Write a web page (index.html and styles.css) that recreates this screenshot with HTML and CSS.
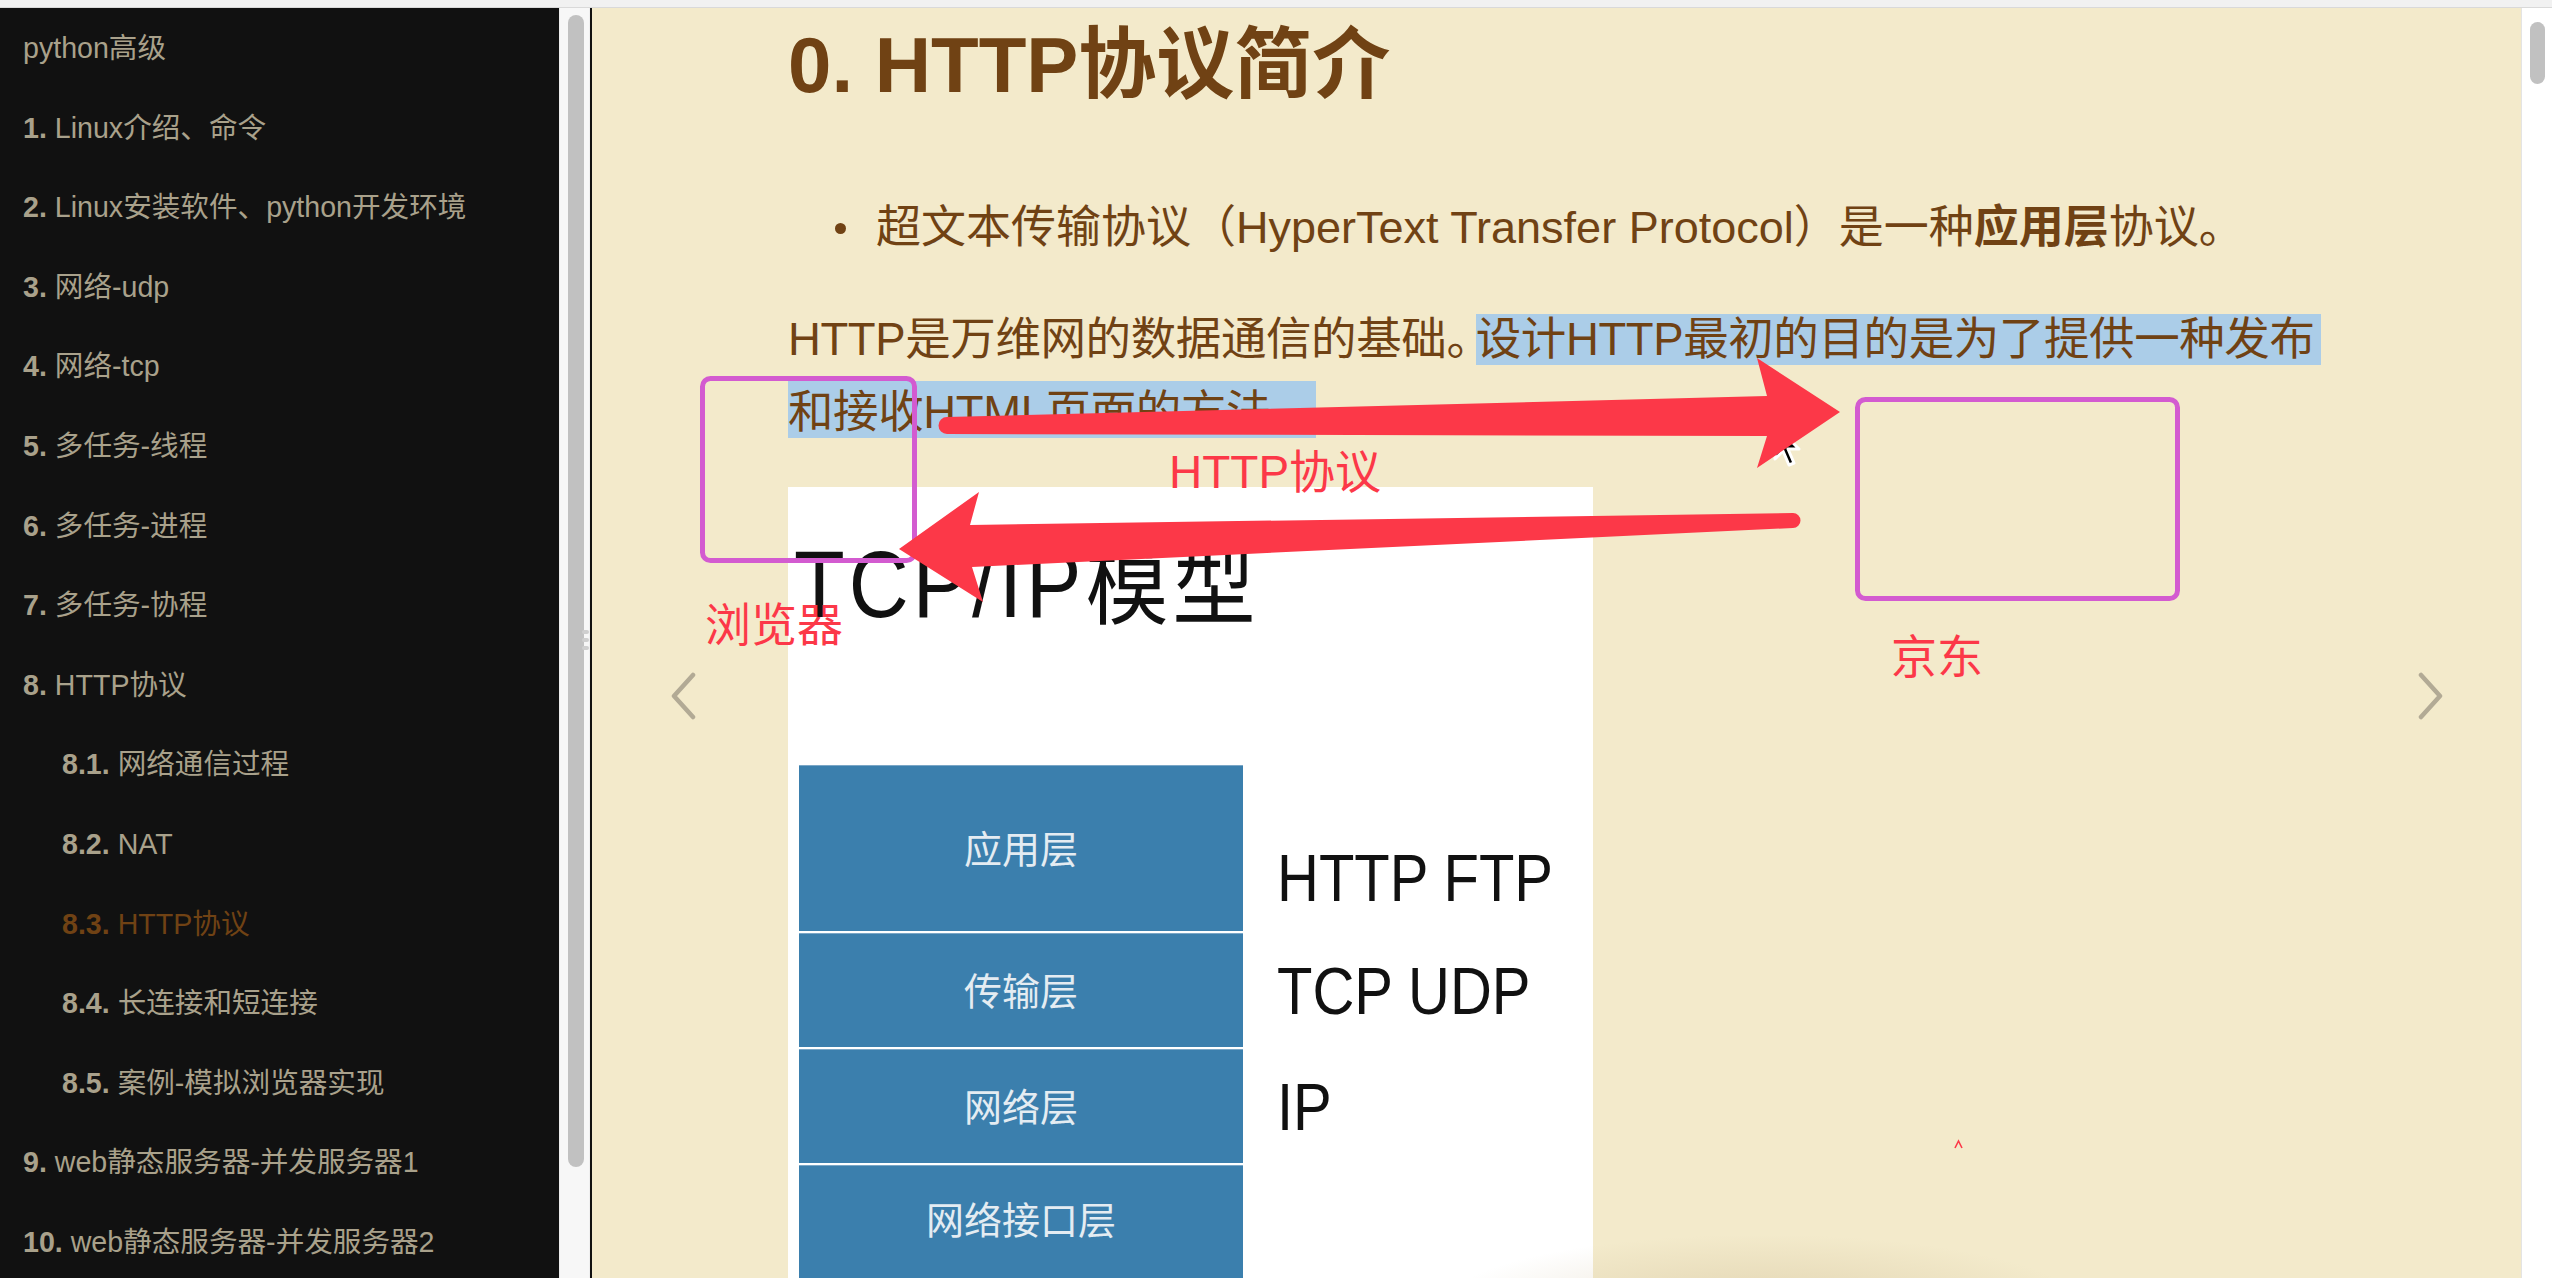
FILE: index.html
```html
<!DOCTYPE html>
<html lang="zh-CN">
<head>
<meta charset="utf-8">
<title>HTTP协议</title>
<link rel="stylesheet" href="styles.css">
</head>
<body>
<div class="topbar"></div>
<div class="app">
  <aside class="sidebar">
    <ul class="summary">
      <li class="header">python高级</li>
      <li><b>1.</b> Linux介绍、命令</li>
      <li><b>2.</b> Linux安装软件、python开发环境</li>
      <li><b>3.</b> 网络-udp</li>
      <li><b>4.</b> 网络-tcp</li>
      <li><b>5.</b> 多任务-线程</li>
      <li><b>6.</b> 多任务-进程</li>
      <li><b>7.</b> 多任务-协程</li>
      <li><b>8.</b> HTTP协议</li>
      <li class="sub"><b>8.1.</b> 网络通信过程</li>
      <li class="sub"><b>8.2.</b> NAT</li>
      <li class="sub active"><b>8.3.</b> HTTP协议</li>
      <li class="sub"><b>8.4.</b> 长连接和短连接</li>
      <li class="sub"><b>8.5.</b> 案例-模拟浏览器实现</li>
      <li><b>9.</b> web静态服务器-并发服务器1</li>
      <li><b>10.</b> web静态服务器-并发服务器2</li>
    </ul>
  </aside>
  <div class="lscroll">
    <div class="lthumb"></div>
    <div class="grip"><i></i><i></i><i></i></div>
  </div>
  <main class="content">
    <div class="page">
      <h1>0. HTTP协议简介</h1>
      <ul class="bullets">
        <li>超文本传输协议（HyperText Transfer Protocol）是一种<strong>应用层</strong>协议。</li>
      </ul>
      <p class="para">HTTP是万维网的数据通信的基础<span class="halt">。</span><span class="sel1">设计HTTP最初的目的是为了提供一种发布</span><br><span class="sel2">和接收HTML页面的方法。</span></p>
      <div class="figure">
        <div class="fig-title">TCP/IP模型</div>
        <div class="stack">
          <div class="layer l1">应用层</div><div class="proto p1">HTTP FTP</div>
          <div class="layer l2">传输层</div><div class="proto p2">TCP UDP</div>
          <div class="layer l3">网络层</div><div class="proto p3">IP</div>
          <div class="layer l4">网络接口层</div><div class="proto"></div>
        </div>
      </div>
    </div>
    <div class="nav nav-prev"><svg width="28" height="48" viewBox="0 0 28 48"><polyline points="24,3 5,24 24,45" fill="none" stroke="#b2aa95" stroke-width="4.5" stroke-linecap="round" stroke-linejoin="round"/></svg></div>
    <div class="nav nav-next"><svg width="28" height="48" viewBox="0 0 28 48"><polyline points="4,3 23,24 4,45" fill="none" stroke="#b2aa95" stroke-width="4.5" stroke-linecap="round" stroke-linejoin="round"/></svg></div>
    <div class="vignette"></div>
  </main>
  <div class="rscroll"><div class="rthumb"></div></div>
</div>

<svg class="annot" width="2552" height="1278" viewBox="0 0 2552 1278">
  <rect x="702.5" y="378.5" width="212" height="182" rx="8" fill="none" stroke="#d35bd0" stroke-width="5"/>
  <rect x="1857.5" y="399.5" width="320" height="199" rx="8" fill="none" stroke="#d35bd0" stroke-width="5"/>
  <path d="M1775,425 L1775,459 L1783,451 L1789,465 L1794,463 L1788,449 L1799,449 Z" fill="#000" stroke="#fff" stroke-width="3" stroke-linejoin="round"/>
  <path d="M947,417 L1767,396 L1757,358 L1840,412 L1757,468 L1767,436 L947,434 A8.5,8.5 0 0 1 947,417 Z" fill="#fc3848"/>
  <path d="M1793,513 L970,525 L979,492 L899,549 L983,602 L972,567 L1793,528 A7.5,7.5 0 0 0 1793,513 Z" fill="#fc3848"/>
  <polyline points="1955,1148 1958.5,1141 1962,1148" fill="none" stroke="#fc3848" stroke-width="1.6"/>
</svg>
<div class="mark mark-http">HTTP协议</div>
<div class="mark mark-browser">浏览器</div>
<div class="mark mark-jd">京东</div>
</body>
</html>
```

FILE: styles.css
```css
* { box-sizing: border-box; }
html, body { margin: 0; padding: 0; }
body {
  width: 2552px;
  height: 1278px;
  overflow: hidden;
  position: relative;
  background: #ffffff;
  font-family: "Liberation Sans", "Noto Sans CJK SC", sans-serif;
}
.topbar {
  height: 8px;
  background: #f1f1f1;
  border-bottom: 1px solid #d9d9d9;
}
.app {
  display: flex;
  height: 1270px;
}

/* sidebar */
.sidebar {
  width: 559px;
  flex: none;
  background: #111111;
  color: #a9a18b;
  overflow: hidden;
}
.summary {
  list-style: none;
  margin: 0;
  padding: 0;
}
.summary li {
  height: 79.6px;
  line-height: 80px;
  font-size: 28.6px;
  padding-left: 23px;
  white-space: nowrap;
}
.summary li.sub { padding-left: 62px; }
.summary li.active { color: #704214; }
.summary b { font-weight: bold; }

.lscroll {
  width: 31px;
  flex: none;
  background: #f7f7f7;
  border-left: 1px solid #ececec;
  border-right: 1px solid #efefef;
  position: relative;
  padding: 7px 0 0 8px;
}
.lthumb {
  width: 16px;
  height: 1152px;
  background: #c1c1c1;
  border-radius: 8px;
}
.grip {
  position: absolute;
  left: 22px;
  top: 622px;
  display: flex;
  flex-direction: column;
  gap: 4px;
}
.grip i {
  display: block;
  width: 7px;
  height: 4px;
  border-radius: 2px;
  background: #cfcfcf;
}

/* content */
.content {
  flex: 1;
  background: #f3eacb;
  border-left: 2px solid #111111;
  position: relative;
  overflow: hidden;
  color: #704214;
}
.page {
  padding-left: 196px;
}
.page h1 {
  margin: 19px 0 0 0;
  font-size: 78px;
  line-height: 76px;
  font-weight: bold;
  color: #704214;
}
.bullets {
  list-style: none;
  margin: 88px 0 0 0;
  padding: 0;
}
.bullets li {
  font-size: 45px;
  line-height: 74px;
  padding-left: 88px;
  position: relative;
}
.bullets li::before {
  content: "";
  position: absolute;
  left: 47px;
  top: 32px;
  width: 11px;
  height: 11px;
  border-radius: 50%;
  background: #704214;
}
.bullets strong { font-weight: bold; }
.para {
  margin: 37.5px 0 0 0;
  font-size: 45.5px;
  line-height: 73px;
  letter-spacing: -0.4px;
  white-space: nowrap;
}
.halt {
  font-feature-settings: "halt" 1;
  margin-right: 7px;
}
.sel1 {
  background: #abcde8;
  padding: 0 6px 0 0;
}
.sel2 {
  background: #abcde8;
  padding: 6px 0 0 0;
}

/* figure */
.figure {
  margin-top: 38.5px;
  width: 805px;
  height: 800px;
  background: #ffffff;
  position: relative;
}
.fig-title {
  position: absolute;
  left: 6px;
  top: 50px;
  font-size: 83px;
  line-height: 96px;
  letter-spacing: 4px;
  color: #111111;
  transform: scaleY(1.14);
  transform-origin: left center;
}
.stack {
  position: absolute;
  left: 11px;
  top: 278px;
  display: grid;
  grid-template-columns: 444px 340px;
  grid-template-rows: 166px 114px 114px 130px;
  row-gap: 2px;
}
.layer {
  background: #3b7fad;
  color: #e4ecf2;
  font-size: 38px;
  display: flex;
  align-items: center;
  justify-content: center;
  border-top: 1px solid #7aa6c6;
  padding-bottom: 5px;
}
.l4 { align-items: flex-start; padding-top: 24px; padding-bottom: 0; }
.proto {
  color: #111111;
  font-size: 58px;
  padding-left: 34px;
  display: flex;
  align-items: center;
  transform: scaleY(1.16);
}
.p1 { padding-top: 50px; }

/* navigation chevrons */
.nav {
  position: absolute;
  top: 664px;
  width: 28px;
  height: 48px;
}
.nav svg { display: block; }
.nav-prev { left: 77px; }
.nav-next { left: 1825px; }

.vignette {
  position: absolute;
  left: 820px;
  top: 1220px;
  width: 700px;
  height: 160px;
  background: radial-gradient(ellipse at center, rgba(200, 180, 140, 0.4) 0%, rgba(200, 180, 140, 0) 65%);
}

/* right scrollbar */
.rscroll {
  width: 31px;
  flex: none;
  background: #ffffff;
  border-left: 1px solid #e4e4e4;
  padding: 14px 0 0 8px;
}
.rthumb {
  width: 15px;
  height: 62px;
  background: #c1c1c1;
  border-radius: 8px;
}

/* annotations */
.annot {
  position: absolute;
  left: 0;
  top: 0;
  pointer-events: none;
}
.mark {
  position: absolute;
  color: #fc3848;
  font-size: 46px;
  line-height: 46px;
  white-space: nowrap;
}
.mark-http { left: 1169px; top: 449px; }
.mark-browser { left: 705px; top: 602px; }
.mark-jd { left: 1891px; top: 634px; }
```
